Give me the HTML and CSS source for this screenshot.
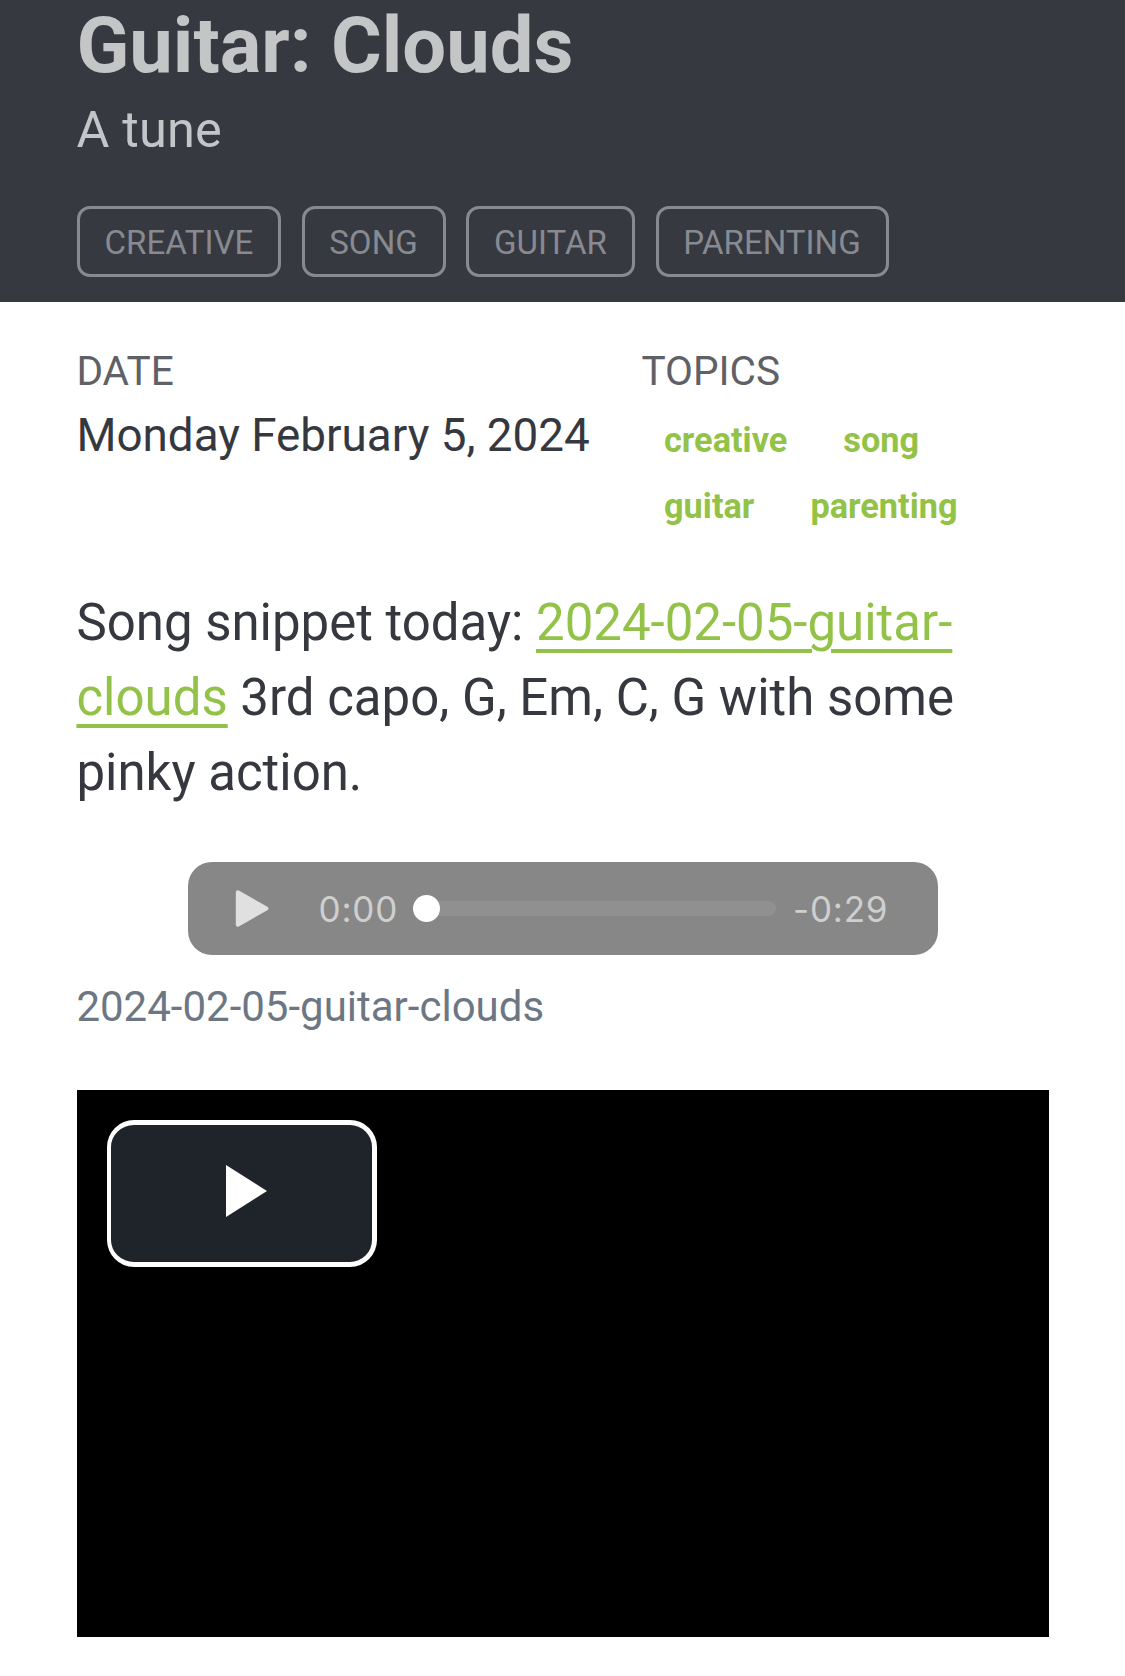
FILE: index.html
```html
<!DOCTYPE html>
<html lang="en">
<head>
<meta charset="utf-8">
<title>Guitar: Clouds</title>
<link rel="stylesheet" href="styles.css">
</head>
<body>
<header class="hero">
  <h1 class="title">Guitar: Clouds</h1>
  <p class="subtitle">A tune</p>
  <nav class="tags">
    <a class="tag tag-creative">CREATIVE</a>
    <a class="tag tag-song">SONG</a>
    <a class="tag tag-guitar">GUITAR</a>
    <a class="tag tag-parenting">PARENTING</a>
  </nav>
</header>
<main class="content">
  <section class="meta">
    <div class="meta-date">
      <h2 class="label">DATE</h2>
      <p class="date">Monday February 5, 2024</p>
    </div>
    <div class="meta-topics">
      <h2 class="label">TOPICS</h2>
      <div class="topics">
        <div class="topic-row"><a class="topic">creative</a><a class="topic">song</a></div>
        <div class="topic-row"><a class="topic">guitar</a><a class="topic">parenting</a></div>
      </div>
    </div>
  </section>
  <p class="text">Song snippet today: <a class="link">2024-02-05-guitar-<br>clouds</a> 3rd capo, G, Em, C, G with some<br>pinky action.</p>
  <figure class="audio">
    <div class="player">
      <svg class="player-play" width="34" height="38" viewBox="0 0 34 38"><path d="M2.8 2.3 31.4 18.5 2.8 34.7Z" fill="#e0e0e0" stroke="#e0e0e0" stroke-width="4" stroke-linejoin="round"/></svg>
      <span class="time elapsed">0:00</span>
      <div class="track"><span class="knob"></span></div>
      <span class="time remaining">-0:29</span>
    </div>
    <figcaption class="caption">2024-02-05-guitar-clouds</figcaption>
  </figure>
  <div class="video">
    <div class="video-button">
      <svg width="41" height="52" viewBox="0 0 41 52"><path d="M0 0 41 26 0 52Z" fill="#fff"/></svg>
    </div>
  </div>
</main>
</body>
</html>
```

FILE: styles.css
```css
* { box-sizing: border-box; }

body {
  margin: 0;
  background: #fff;
  color: #36383f;
  font-family: Roboto, "Liberation Sans", sans-serif;
  white-space: nowrap;
}

h1, h2, p, figure { margin: 0; font-weight: 400; }

.title, .subtitle, .label, .date, .text, .caption { margin-left: -0.6px; }

.hero {
  height: 302px;
  padding: 1px 0 0 77px;
  background: #373940;
}

.title {
  color: #c3c5c7;
  font-size: 77.7px;
  font-weight: 700;
  line-height: 90px;
}

.subtitle {
  margin-top: 9px;
  color: #c3c5c9;
  font-size: 50.5px;
  line-height: 60px;
  letter-spacing: 0.2px;
}

.tags {
  display: flex;
  gap: 20.5px;
  margin-top: 46px;
}

.tag {
  height: 71px;
  padding: 2px 0 0;
  border: 3px solid #888a92;
  border-radius: 13px;
  color: #888a92;
  font-size: 33.1px;
  line-height: 63px;
  text-align: center;
}
.tag-creative { width: 204px; }
.tag-song { width: 144px; }
.tag-guitar { width: 169px; }
.tag-parenting { width: 233px; }

.content { padding: 45px 76px 39px 77px; }

.meta {
  display: grid;
  grid-template-columns: 565px 1fr;
}

.label {
  color: #5f6166;
  font-size: 40.6px;
  line-height: 48px;
}

.date {
  margin-top: 8px;
  font-size: 45.8px;
  line-height: 66px;
}

.topics {
  margin-top: 13px;
  padding-left: 22px;
}
.topic-row {
  display: flex;
  gap: 56px;
  height: 65.5px;
}
.topic {
  color: #92c348;
  font-size: 34.3px;
  font-weight: 700;
  line-height: 65px;
}

.text {
  margin-top: 46px;
  font-size: 50.97px;
  line-height: 75px;
}

.link {
  color: #92c348;
  text-decoration: underline;
  text-decoration-thickness: 4px;
  text-underline-offset: 9px;
}

.audio { margin-top: 52px; }

.player {
  display: flex;
  align-items: center;
  width: 750px;
  height: 93px;
  margin: 0 auto;
  padding: 0 0 0 47px;
  border-radius: 24px;
  background: #878787;
}
.player-play { flex: none; }

.time {
  color: #cfcfcf;
  font-family: Inter, sans-serif;
  font-size: 35px;
  font-weight: 400;
  line-height: 40px;
  letter-spacing: 0.8px;
}
.elapsed { width: 94px; margin-left: 49.5px; }
.remaining { margin-left: 17px; }

.track {
  display: flex;
  align-items: center;
  width: 363.5px;
  height: 15px;
  border-radius: 8px;
  background: #909090;
}
.knob {
  width: 27px;
  height: 27px;
  border-radius: 50%;
  background: #fff;
}

.caption {
  margin-top: 22px;
  color: #6d7784;
  font-size: 42px;
  line-height: 60px;
}

.video {
  height: 547px;
  margin-top: 53px;
  padding: 30px;
  background: #000;
}
.video-button {
  display: flex;
  width: 270px;
  height: 147px;
  padding: 40px 0 0 115px;
  border: 5px solid #fff;
  border-left-width: 4px;
  border-radius: 27px;
  background: #1f242b;
}
```
